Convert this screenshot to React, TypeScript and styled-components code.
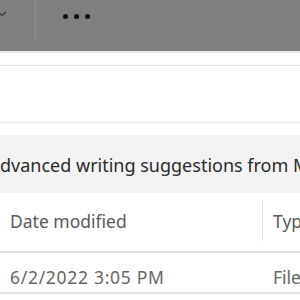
import styled, { createGlobalStyle } from 'styled-components';

const Global = createGlobalStyle`
  html, body {
    margin: 0;
    padding: 0;
    background: #ffffff;
    width: 300px;
    height: 300px;
    overflow: hidden;
  }
  body {
    font-family: "Noto Sans", "Open Sans", sans-serif;
  }
`;

const Page = styled.div`
  width: 300px;
  height: 300px;
  overflow: hidden;
  display: flex;
  flex-direction: column;
`;

const Toolbar = styled.div`
  height: 51px;
  background: #808080;
  display: flex;
  align-items: flex-start;
  flex-shrink: 0;
`;

const ChevronSlot = styled.div`
  width: 35px;
  height: 40px;
  display: flex;
  align-items: flex-start;
  padding-top: 11px;
  box-sizing: border-box;
`;

const Separator = styled.div`
  width: 1px;
  height: 40px;
  background: #8c8c8c;
`;

const MoreButton = styled.div`
  margin-left: 27px;
  margin-top: 14px;
  display: flex;
  gap: 6px;
`;

const Dot = styled.span`
  width: 5px;
  height: 5px;
  border-radius: 50%;
  background: #111;
`;

const Rule = styled.div<{ $h?: number; $c?: string }>`
  height: ${({ $h }) => $h ?? 1}px;
  background: ${({ $c }) => $c ?? '#e6e6e6'};
  flex-shrink: 0;
`;

const Spacer = styled.div<{ $h: number }>`
  height: ${({ $h }) => $h}px;
  flex-shrink: 0;
`;

const Banner = styled.div`
  height: 58px;
  background: #f3f3f3;
  display: flex;
  align-items: center;
  flex-shrink: 0;
  font-size: 18px;
  color: #2b2b2b;
  white-space: nowrap;
  overflow: hidden;
  padding-top: 2px;
  box-sizing: border-box;
`;

const Row = styled.div<{ $h: number; $shift: number }>`
  height: ${({ $h }) => $h}px;
  display: grid;
  grid-template-columns: 262px 1px 1fr;
  align-items: center;
  flex-shrink: 0;
  font-size: 17.5px;
  white-space: nowrap;
  overflow: hidden;
  box-sizing: border-box;
  padding-top: ${({ $shift }) => Math.max($shift, 0) * 2}px;
  padding-bottom: ${({ $shift }) => Math.max(-$shift, 0) * 2}px;
`;

const Cell = styled.div<{ $color: string; $spacing?: number }>`
  padding-left: 10px;
  color: ${({ $color }) => $color};
  letter-spacing: ${({ $spacing }) => $spacing ?? 0}px;
`;

const ColDivider = styled.div`
  width: 1px;
  align-self: stretch;
  background: #e3e3e3;
  margin-bottom: 0;
`;

const Empty = styled.div``;

export default function App() {
  return (
    <Page>
      <Global />
      <Toolbar>
        <ChevronSlot>
          <svg width="8" height="6" viewBox="0 0 8 6">
            <path d="M-2 1 L2 4.5 L6 1" fill="none" stroke="#3a3a3a" strokeWidth="1.2" />
          </svg>
        </ChevronSlot>
        <Separator />
        <MoreButton>
          <Dot />
          <Dot />
          <Dot />
        </MoreButton>
      </Toolbar>
      <Rule $h={2} $c="#e8e8e8" />
      <Spacer $h={12} />
      <Rule $c="#e0e0e0" />
      <Spacer $h={56} />
      <Rule $c="#ececec" />
      <Spacer $h={12} />
      <Banner>dvanced writing suggestions from Microsoft Editor</Banner>
      <Spacer $h={7} />
      <Row $h={51} $shift={-5}>
        <Cell $color="#5a5a5a">Date modified</Cell>
        <ColDivider />
        <Cell $color="#5a5a5a">Type</Cell>
      </Row>
      <Rule $h={2} $c="#dce3e8" />
      <Row $h={39} $shift={4}>
        <Cell $color="#666666" $spacing={0.7}>6/2/2022 3:05 PM</Cell>
        <Empty />
        <Cell $color="#666666">File folder</Cell>
      </Row>
      <Rule $h={2} $c="#dce3e8" />
    </Page>
  );
}
